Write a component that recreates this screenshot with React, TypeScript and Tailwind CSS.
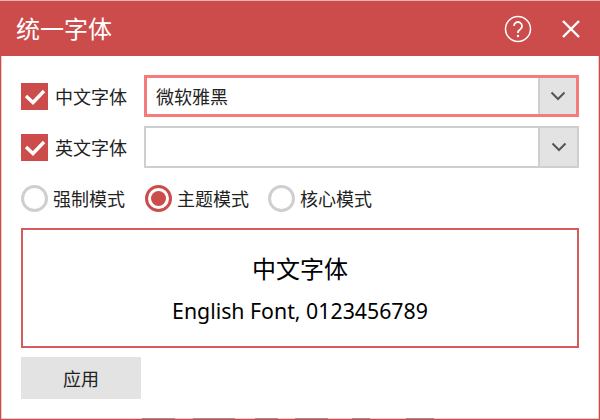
import React from "react";

const CJK = "font-['Microsoft_YaHei','Noto_Sans_CJK_SC','Noto_Sans',sans-serif]";

function Check() {
  return (
    <div className="w-[27px] h-[27px] bg-[#cc4c4c] flex items-center justify-center shrink-0">
      <svg width="27" height="27" viewBox="0 0 27 27">
        <path d="M5 13l7 6.500L23 8" fill="none" stroke="#fff" strokeWidth="3.4" />
      </svg>
    </div>
  );
}

function Combo({ value, focus }: { value?: string; focus?: boolean }) {
  return (
    <div className={`flex flex-1 h-[42px] ${focus ? "border-[3px] border-[#f47c7c]" : "border-2 border-[#cfcfcf]"} bg-white`}>
      <div className="flex-1 flex items-center pl-[9px] text-[18px] text-[#222]">{value}</div>
      <div className={`${focus ? "w-[38px]" : "w-[39px]"} bg-[#e3e3e3] border-l-2 border-[#cfcfcf] flex items-center justify-center`}>
        <svg width="16" height="10" viewBox="0 0 16 10">
          <path d="M1.5 1.5L8 8l6.500-6.500" fill="none" stroke="#555" strokeWidth="2" />
        </svg>
      </div>
    </div>
  );
}

function Radio({ label, on, w }: { label: string; on?: boolean; w: string }) {
  return (
    <div className={`flex items-center gap-[5px] ${w}`}>
      <div className={`w-[27px] h-[27px] rounded-full border-[3px] ${on ? "border-[#cc4c4c]" : "border-[#cfcfcf]"} flex items-center justify-center`}>
        {on && <div className="w-[15px] h-[15px] rounded-full bg-[#cc4c4c]" />}
      </div>
      <span className="text-[18px] text-[#222]">{label}</span>
    </div>
  );
}

export default function App() {
  return (
    <div className={`w-[600px] h-[420px] bg-[#cc4c4c] overflow-hidden flex flex-col ${CJK}`}>
      <div className="h-[56px] bg-[#cc4c4c] border-t border-[#e9b5b5] flex items-center pl-[16px] pr-[19px] shrink-0">
        <span className="text-white text-[24px] leading-none flex-1 -mt-[1px]">统一字体</span>
        <svg width="28" height="28" viewBox="0 0 28 28" className="mr-[29px]">
          <circle cx="14" cy="14" r="12.500" fill="none" stroke="#fff" strokeWidth="1.500" />
          <path d="M10 11a4 4 0 1 1 6.300 3.300c-1.500 1-2.300 1.700-2.300 3.700" fill="none" stroke="#fff" strokeWidth="1.800" />
          <circle cx="14" cy="21" r="1.200" fill="#fff" />
        </svg>
        <svg width="20" height="20" viewBox="0 0 20 20">
          <path d="M2 2l16 16M18 2L2 18" stroke="#fff" strokeWidth="2.400" />
        </svg>
      </div>
      <div className="flex-1 mx-[1px] mb-[1px] border-x border-[#f3c9c9] bg-white flex flex-col px-[19px] pt-[19px]">
        <div className="flex items-center h-[42px]">
          <div className="flex items-center gap-[7px] w-[123px]">
            <Check />
            <span className="text-[18px] text-[#222]">中文字体</span>
          </div>
          <Combo value="微软雅黑" focus />
        </div>
        <div className="flex items-center h-[42px] mt-[9px]">
          <div className="flex items-center gap-[7px] w-[123px]">
            <Check />
            <span className="text-[18px] text-[#222]">英文字体</span>
          </div>
          <Combo />
        </div>
        <div className="flex items-center mt-[17px]">
          <Radio label="强制模式" w="w-[124px]" />
          <Radio label="主题模式" on w="w-[123px]" />
          <Radio label="核心模式" w="w-[123px]" />
        </div>
        <div className="h-[120px] mt-[16px] border-2 border-[#d65c5c] flex flex-col items-center justify-center">
          <div className="text-[24px] text-black leading-[32px]">中文字体</div>
          <div className="text-[21.300px] text-black leading-[28px] mt-[13px] font-['Noto_Sans',sans-serif]">English Font, 0123456789</div>
        </div>
        <button className="w-[120px] h-[42px] mt-[9px] bg-[#e3e3e3] text-[18px] text-[#222]">应用</button>
        <div className="mt-auto -mx-[19px] h-[1px] bg-[#f3c9c9] flex">
          <div className="ml-[140px] w-[33px] bg-[#a89090]" />
          <div className="ml-[18px] w-[42px] bg-[#a89090]" />
          <div className="ml-[20px] w-[23px] bg-[#a89090]" />
          <div className="ml-[17px] w-[33px] bg-[#a89090]" />
          <div className="ml-[24px] w-[18px] bg-[#a89090]" />
          <div className="ml-[36px] w-[28px] bg-[#a89090]" />
        </div>
      </div>
    </div>
  );
}
